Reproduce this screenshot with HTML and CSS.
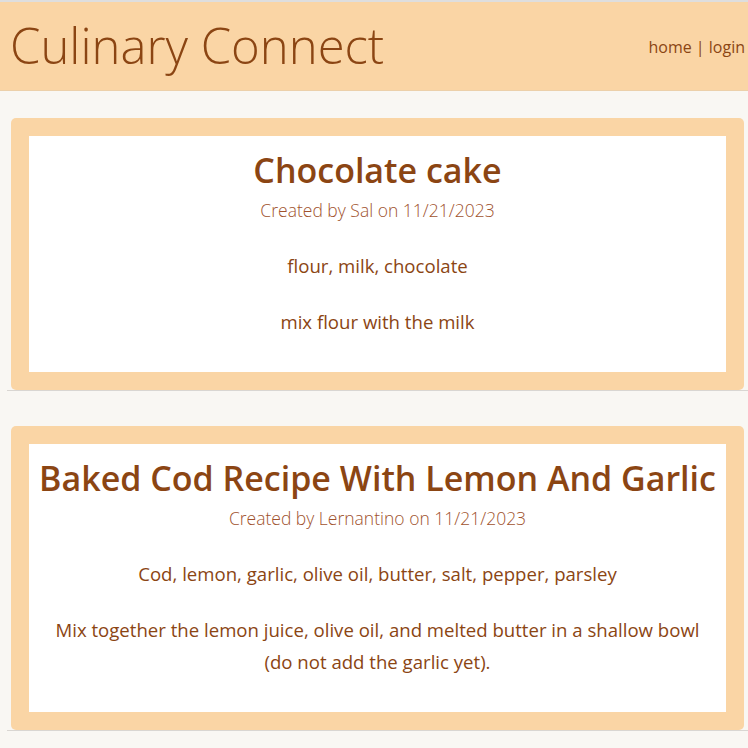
FILE: index.html
```html
<!DOCTYPE html>
<html lang="en">
<head>
<meta charset="utf-8">
<title>Culinary Connect</title>
<link rel="stylesheet" href="styles.css">
</head>
<body>
<header class="site-header">
  <h1 class="brand">Culinary Connect</h1>
  <nav class="nav"><a href="#">home</a> | <a href="#">login</a></nav>
</header>
<main class="recipes">
  <section class="recipe-row">
    <article class="recipe-card">
      <div class="recipe-inner">
        <h2 class="recipe-title">Chocolate cake</h2>
        <div class="recipe-meta">Created by Sal on 11/21/2023</div>
        <p class="recipe-ingredients">flour, milk, chocolate</p>
        <p class="recipe-steps">mix flour with the milk</p>
      </div>
    </article>
  </section>
  <section class="recipe-row">
    <article class="recipe-card">
      <div class="recipe-inner">
        <h2 class="recipe-title">Baked Cod Recipe With Lemon And Garlic</h2>
        <div class="recipe-meta">Created by Lernantino on 11/21/2023</div>
        <p class="recipe-ingredients">Cod, lemon, garlic, olive oil, butter, salt, pepper, parsley</p>
        <p class="recipe-steps">Mix together the lemon juice, olive oil, and melted butter in a shallow bowl (do not add the garlic yet).</p>
      </div>
    </article>
  </section>
</main>
</body>
</html>
```
FILE: styles.css
```css
html, body {
  margin: 0;
  padding: 0;
}
body {
  background: #f9f7f3;
  font-family: "Open Sans", "Noto Sans", sans-serif;
  color: #8b4513;
  width: 748px;
  overflow: hidden;
}
.site-header {
  border-top: 2px solid #dedede;
  background: #fad5a5;
  border-bottom: 1px solid #ecd0aa;
  height: 88px;
  display: flex;
  align-items: center;
  justify-content: space-between;
  padding: 0 3px 0 10px;
}
.brand {
  margin: 0;
  font-weight: 300;
  font-size: 49px;
  line-height: 1;
  color: #8b4513;
  position: relative;
  top: -1px;
}
.nav {
  font-size: 16px;
  color: #8b4513;
  position: relative;
  top: 1px;
}
.nav a {
  color: #8b4513;
  text-decoration: none;
}
.recipes {
  padding-top: 27px;
  display: flex;
  flex-direction: column;
  gap: 35px;
}
.recipe-row {
  margin-left: 7px;
  padding: 0 4px;
  border-bottom: 1px solid #d9d6d2;
}
.recipe-card {
  background: #fad5a5;
  border-radius: 5px;
  padding: 18px;
}
.recipe-inner {
  background: #ffffff;
  text-align: center;
  padding: 12px 0 34px;
}
.recipe-title {
  margin: 0;
  font-size: 34px;
  font-weight: 600;
  line-height: 44px;
  color: #8b4513;
  white-space: nowrap;
}
.recipe-meta {
  font-size: 17.5px;
  font-weight: 300;
  line-height: 36px;
  color: #a0522d;
}
.recipe-ingredients {
  margin: 22px 0 0;
  padding: 0 20px;
  font-size: 18.6px;
  line-height: 32px;
}
.recipe-steps {
  margin: 24px 0 0;
  padding: 0 20px;
  font-size: 18.6px;
  line-height: 32px;
}
```
